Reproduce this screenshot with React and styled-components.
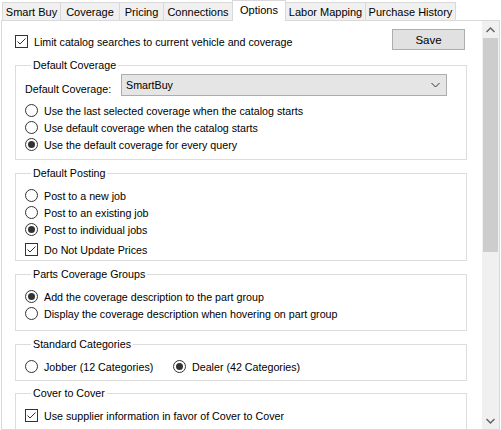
import React from 'react';
import styled, { createGlobalStyle } from 'styled-components';

const GlobalStyle = createGlobalStyle`
  html, body {
    margin: 0;
    padding: 0;
    background: #fff;
  }
  body {
    font-family: "Liberation Sans", Arial, sans-serif;
    font-size: 10.7px;
    color: #000;
  }
  * {
    box-sizing: border-box;
  }
`;

const tabs = [
  { label: 'Smart Buy', width: 59 },
  { label: 'Coverage', width: 60 },
  { label: 'Pricing', width: 45 },
  { label: 'Connections', width: 70 },
  { label: 'Options', width: 54, active: true },
  { label: 'Labor Mapping', width: 81 },
  { label: 'Purchase History', width: 91 },
];

const CheckMark = () => (
  <svg width="11" height="11" viewBox="0 0 11 11">
    <path d="M1.5 5.5 L4 8 L9.5 2.5" fill="none" stroke="#333" strokeWidth="1" />
  </svg>
);

// combo box arrow
const ComboArrow = () => (
  <svg width="9" height="6" viewBox="0 0 9 6">
    <path d="M0.5 1 L4.5 5 L8.5 1" fill="none" stroke="#333" strokeWidth="1" />
  </svg>
);

// scroll bar arrows
const ScrollChevron = ({ up }) => (
  <svg width="9" height="6" viewBox="0 0 9 6">
    <path
      d={up ? 'M0.5 5 L4.5 1 L8.5 5' : 'M0.5 1 L4.5 5 L8.5 1'}
      fill="none"
      stroke="#606060"
      strokeWidth="1.4"
    />
  </svg>
);

const CheckOption = ({ checked, children }) => (
  <Row>
    <CheckBox>{checked && <CheckMark />}</CheckBox>
    <span>{children}</span>
  </Row>
);

const RadioOption = ({ checked, width, children }) => (
  <Row $width={width}>
    <Radio $checked={checked} />
    <span>{children}</span>
  </Row>
);

const App = () => {
  return (
    <>
      <GlobalStyle />
      <Window>
        <TabStrip>
          {tabs.map((t) => (
            <Tab key={t.label} $w={t.width} $active={t.active}>
              {t.label}
            </Tab>
          ))}
        </TabStrip>

        <Panel>
          <Content>
            <TopRow>
              <TopCheck>
                <CheckOption checked>Limit catalog searches to current vehicle and coverage</CheckOption>
              </TopCheck>
              <Button>Save</Button>
            </TopRow>

            <Group $mt={8} $pt={2} $pb={6}>
              <Legend>Default Coverage</Legend>
              <ComboRow>
                <ComboLabel>Default Coverage:</ComboLabel>
                <Combo>
                  <span>SmartBuy</span>
                  <ComboArrow />
                </Combo>
              </ComboRow>
              <Options $mt={6}>
                <RadioOption>Use the last selected coverage when the catalog starts</RadioOption>
                <RadioOption>Use default coverage when the catalog starts</RadioOption>
                <RadioOption checked>Use the default coverage for every query</RadioOption>
              </Options>
            </Group>

            <Group $mt={6} $pt={7} $pb={2}>
              <Legend>Default Posting</Legend>
              <Options>
                <RadioOption>Post to a new job</RadioOption>
                <RadioOption>Post to an existing job</RadioOption>
                <RadioOption checked>Post to individual jobs</RadioOption>
              </Options>
              <Options $mt={3}>
                <CheckOption checked>Do Not Update Prices</CheckOption>
              </Options>
            </Group>

            <Group $mt={6} $pt={7} $pb={8}>
              <Legend>Parts Coverage Groups</Legend>
              <Options>
                <RadioOption checked>Add the coverage description to the part group</RadioOption>
                <RadioOption>Display the coverage description when hovering on part group</RadioOption>
              </Options>
            </Group>

            <Group $mt={6} $pt={7} $pb={5}>
              <Legend>Standard Categories</Legend>
              <InlineOptions>
                <RadioOption width={148}>Jobber (12 Categories)</RadioOption>
                <RadioOption checked>Dealer (42 Categories)</RadioOption>
              </InlineOptions>
            </Group>

            <Group $mt={5} $pt={7} $pb={8}>
              <Legend>Cover to Cover</Legend>
              <Options>
                <CheckOption checked>Use supplier information in favor of Cover to Cover</CheckOption>
              </Options>
            </Group>
          </Content>

          <ScrollBar>
            <ScrollArrow>
              <ScrollChevron up />
            </ScrollArrow>
            <ScrollTrack>
              <Thumb />
            </ScrollTrack>
            <ScrollArrow>
              <ScrollChevron />
            </ScrollArrow>
          </ScrollBar>
        </Panel>
      </Window>
    </>
  );
};

const Window = styled.div`
  width: 501px;
  height: 430px;
  overflow: hidden;
  background: #fff;
`;

const TabStrip = styled.div`
  display: flex;
  align-items: flex-start;
  height: 20px;
  padding-left: 3px;
  font-size: 11px;
`;

const Tab = styled.div`
  position: relative;
  z-index: ${(p) => (p.$active ? 2 : 1)};
  width: ${(p) => p.$w}px;
  height: ${(p) => (p.$active ? 21 : 18)}px;
  margin-top: ${(p) => (p.$active ? 0 : 2)}px;
  margin-left: -1px;
  display: flex;
  align-items: center;
  justify-content: center;
  padding-bottom: ${(p) => (p.$active ? 2 : 0)}px;
  border: 1px solid #d9d9d9;
  border-bottom: none;
  background: ${(p) => (p.$active ? '#fff' : '#f0f0f0')};
  white-space: nowrap;
`;

const Panel = styled.div`
  display: flex;
  width: 499px;
  height: 410px;
  margin-left: 1px;
  border: 1px solid #d9d9d9;
  background: #fff;
`;

const Content = styled.div`
  flex: 1;
  min-width: 0;
  overflow: hidden;
  padding: 8px 15px 0 13px;
`;

const TopRow = styled.div`
  display: flex;
  justify-content: space-between;
  align-items: flex-start;
`;

const TopCheck = styled.div`
  margin-top: 4px;
`;

const Button = styled.div`
  width: 73px;
  height: 21px;
  margin-right: 2px;
  display: flex;
  align-items: center;
  justify-content: center;
  font-size: 11.5px;
  background: #e1e1e1;
  border: 1px solid #adadad;
`;

const Group = styled.fieldset`
  margin: ${(p) => p.$mt}px 0 0 0;
  padding: ${(p) => p.$pt}px 19px ${(p) => p.$pb}px 9px;
  border: 1px solid #dcdcdc;
  min-width: 0;
`;

const Legend = styled.legend`
  margin-left: 6px;
  padding: 0 2px;
  line-height: 14px;
`;

const ComboRow = styled.div`
  display: flex;
  align-items: flex-start;
`;

const ComboLabel = styled.div`
  width: 96px;
  margin-top: 8px;
  line-height: 14px;
`;

const Combo = styled.div`
  flex: 1;
  height: 22px;
  display: flex;
  align-items: center;
  justify-content: space-between;
  padding: 0 6px 0 4px;
  background: #e5e5e5;
  border: 1px solid #adadad;
`;

const Options = styled.div`
  display: flex;
  flex-direction: column;
  margin-top: ${(p) => p.$mt || 0}px;
`;

const InlineOptions = styled.div`
  display: flex;
`;

const Row = styled.div`
  display: flex;
  align-items: center;
  gap: 6px;
  height: 17px;
  width: ${(p) => (p.$width ? `${p.$width}px` : 'auto')};
  white-space: nowrap;
`;

const CheckBox = styled.div`
  width: 13px;
  height: 13px;
  flex: none;
  display: flex;
  align-items: center;
  justify-content: center;
  border: 1px solid #333;
  background: #fff;
`;

const Radio = styled.div`
  width: 13px;
  height: 13px;
  flex: none;
  border: 1px solid #333;
  border-radius: 50%;
  background: #fff;
  display: flex;
  align-items: center;
  justify-content: center;

  &::after {
    content: '';
    display: ${(p) => (p.$checked ? 'block' : 'none')};
    width: 7px;
    height: 7px;
    border-radius: 50%;
    background: #333;
  }
`;

const ScrollBar = styled.div`
  width: 17px;
  flex: none;
  display: flex;
  flex-direction: column;
  background: #f0f0f0;
`;

const ScrollArrow = styled.div`
  height: 17px;
  flex: none;
  display: flex;
  align-items: center;
  justify-content: center;
`;

const ScrollTrack = styled.div`
  flex: 1;
  padding: 0 1px;
`;

const Thumb = styled.div`
  height: 214px;
  background: #cdcdcd;
`;

export default App;
